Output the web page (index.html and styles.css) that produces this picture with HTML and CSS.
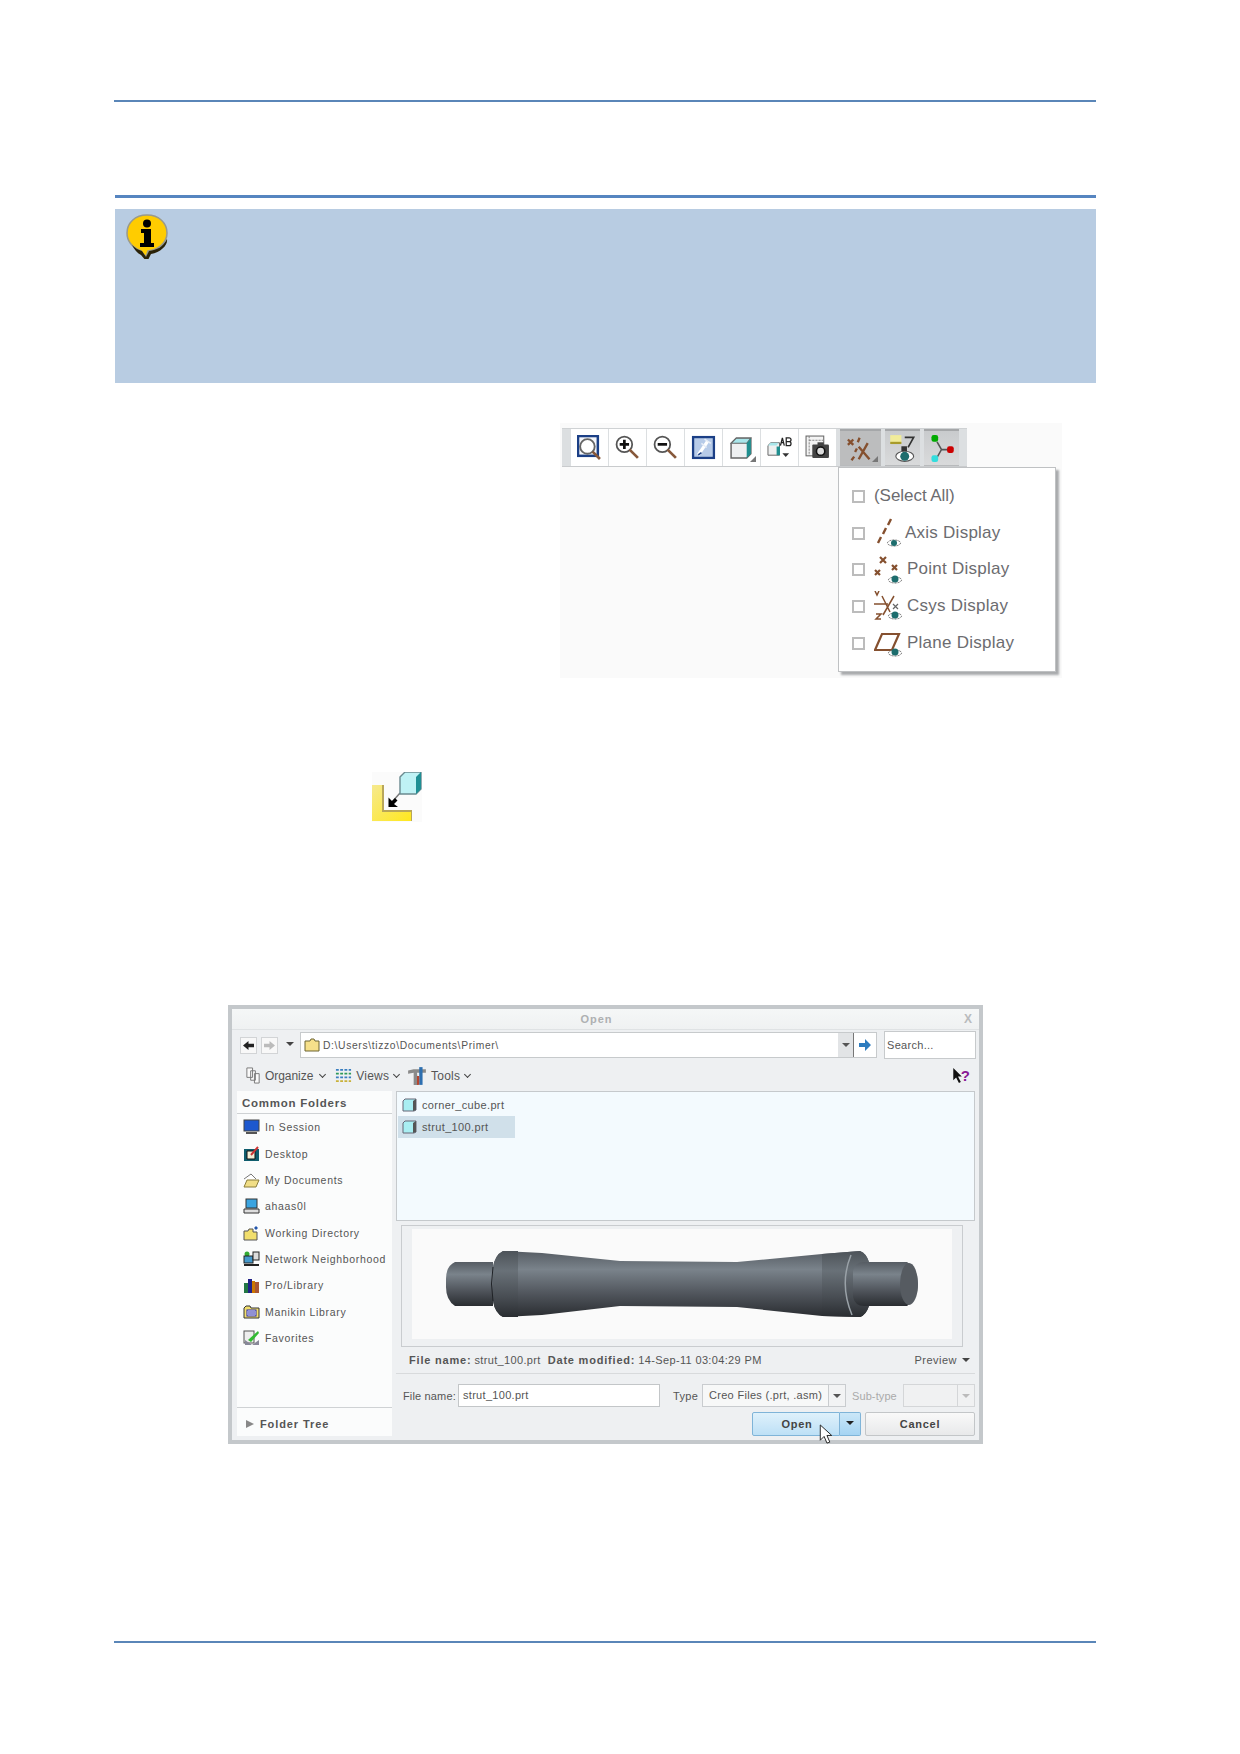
FILE: index.html
```html
<!DOCTYPE html>
<html lang="en">
<head>
<meta charset="utf-8">
<title>Open dialog page</title>
<link rel="stylesheet" href="styles.css">
</head>
<body>
<div class="page">
  <div class="rule rule-top"></div>
  <div class="rule rule-head"></div>

  <div class="note">
    <svg class="note-icon" viewBox="0 0 46 46">
      <path d="M23 2C11 2 3 10 3 20c0 9 7 15 14 18l5 6 2-6c10-1 19-8 19-18C43 10 35 2 23 2z" fill="#fc0" stroke="#9a9a8a" stroke-width="1.5"/>
      <path d="M8 32c3 3 6 5 10 6l4 6 3-6c8-1 14-4 18-12 1 6-6 13-16 15l-4 8-6-7c-4-2-7-6-9-10z" fill="#2a2208"/>
      <circle cx="23" cy="10.500" r="4" fill="#000"/>
      <path d="M17 16h10v14h3v4H16v-4h4V20h-3z" fill="#000"/>
    </svg>
  </div>

  <div class="figure">
    <div class="tb">
      <div class="tb-cell">
        <svg viewBox="0 0 24 24"><rect x="1" y="1" width="19" height="19" fill="#f4f6fa" stroke="#1b3f86" stroke-width="2.400"/><circle cx="10" cy="11" r="7" fill="#fff" stroke="#666" stroke-width="1.800"/><path d="M15 16l7 7" stroke="#87583a" stroke-width="2.600"/></svg>
      </div>
      <div class="tb-cell">
        <svg viewBox="0 0 24 24"><circle cx="9" cy="9" r="7.500" fill="#fff" stroke="#555" stroke-width="1.700"/><path d="M9 4.500v9M4.500 9h9" stroke="#111" stroke-width="2.600"/><path d="M14 14l8 8" stroke="#87583a" stroke-width="2.600"/></svg>
      </div>
      <div class="tb-cell">
        <svg viewBox="0 0 24 24"><circle cx="9" cy="9" r="7.500" fill="#fff" stroke="#555" stroke-width="1.700"/><path d="M4.500 9h9" stroke="#111" stroke-width="2.600"/><path d="M14 14l8 8" stroke="#87583a" stroke-width="2.600"/></svg>
      </div>
      <div class="tb-cell">
        <svg viewBox="0 0 24 24"><rect x="2" y="2" width="20" height="20" fill="#b7cbe8" stroke="#1b3f86" stroke-width="2.200"/><path d="M7 19l9-13" stroke="#fff" stroke-width="3"/><path d="M13 4l6 4M10 8l5 4" stroke="#e8eef7" stroke-width="1.500"/><path d="M7 19l3-2" stroke="#1b3f86" stroke-width="1.500"/></svg>
      </div>
      <div class="tb-cell tb-corner">
        <svg viewBox="0 0 24 24"><path d="M2 8l5-5h14v15l-4 4H2z" fill="#eef0f1" stroke="#666" stroke-width="1.400"/><path d="M2 8l5-5h14l-4 5z" fill="#a8e6ea" stroke="#666"/><path d="M17 8l4-5v15l-4 4z" fill="#1f8f8f"/></svg>
      </div>
      <div class="tb-cell">
        <svg viewBox="0 0 26 24"><path d="M1 10l3-3h9v13H1z" fill="#eef0f0" stroke="#666"/><path d="M1 10l3-3h8l-2 3z" fill="#a8e6ea"/><rect x="10" y="11" width="3.500" height="9" fill="#1f8f8f"/><path d="M14 10l2-8 2 8M15 7h2M20 2v8h3a2 2 0 0 0 0-4h-3 3a2 2 0 0 0 0-4z" fill="none" stroke="#222" stroke-width="1.300"/><path d="M16 18h7l-3.500 4z" fill="#333"/></svg>
      </div>
      <div class="tb-cell">
        <svg viewBox="0 0 24 24"><rect x="1" y="1" width="17" height="19" fill="#f4f4f4" stroke="#666"/><path d="M4 1v19M4 5h14" stroke="#888" stroke-dasharray="2 1"/><rect x="7" y="9" width="16" height="13" rx="1" fill="#444"/><rect x="12" y="7" width="6" height="3" fill="#444"/><circle cx="15" cy="15.500" r="4" fill="#ddd" stroke="#111" stroke-width="1.500"/></svg>
      </div>
      <div class="tb-on tb-on-wide">
        <svg viewBox="0 0 30 26"><g stroke="#85502f" stroke-width="2.600" fill="none"><path d="M1 3l6 6M7 3L1 9M14 1l-2 5M11 13l-2 4M8 22l-3 4M23 7L13 25M13 11l12 14"/></g></svg>
      </div>
      <div class="tb-on">
        <svg viewBox="0 0 24 26"><path d="M1 1h10v7H1z" fill="#f1ec9a"/><path d="M1 8h10" stroke="#a89b2a" stroke-width="2"/><path d="M14 3h8l-5 9" fill="none" stroke="#333" stroke-width="1.500"/><rect x="11" y="11" width="5" height="5" fill="#333"/><ellipse cx="14" cy="20" rx="8" ry="4.500" fill="#fff" stroke="#555"/><circle cx="14" cy="20" r="4" fill="#1d6d6d"/></svg>
      </div>
      <div class="tb-on">
        <svg viewBox="0 0 24 26"><path d="M8 7l4 7-4 7M12 14h6" stroke="#555" stroke-width="1.400" fill="none"/><rect x="3" y="1" width="6" height="6" rx="2" fill="#0a0"/><rect x="3" y="19" width="6" height="6" rx="2" fill="#3dd"/><rect x="17" y="11" width="6" height="6" rx="2" fill="#c00"/></svg>
      </div>
    </div>

    <div class="menu">
      <div class="menu-row">
        <span class="box"></span><span class="menu-label menu-first">(Select All)</span>
      </div>
      <div class="menu-row">
        <span class="box"></span>
        <svg class="menu-icon" viewBox="0 0 30 30"><path d="M17 1l-3 6M12 10l-3 6M7 19l-3 6" stroke="#85502f" stroke-width="2.400"/><ellipse cx="20" cy="25" rx="6.500" ry="3" fill="#fff" stroke="#666" stroke-dasharray="2 1"/><circle cx="20" cy="25" r="3" fill="#1d6d6d"/></svg>
        <span class="menu-label">Axis Display</span>
      </div>
      <div class="menu-row">
        <span class="box"></span>
        <svg class="menu-icon menu-icon-wide" viewBox="0 0 30 30"><path d="M6 2l6 6M12 2L6 8M1 15l5 5M6 15l-5 5M18 10l5 5M23 10l-5 5" stroke="#85502f" stroke-width="2.200"/><ellipse cx="21" cy="25" rx="6.500" ry="3" fill="#fff" stroke="#666" stroke-dasharray="2 1"/><circle cx="21" cy="24" r="3.500" fill="#1d6d6d"/></svg>
        <span class="menu-label">Point Display</span>
      </div>
      <div class="menu-row">
        <span class="box"></span>
        <svg class="menu-icon menu-icon-wide" viewBox="0 0 30 30"><path d="M1 0l2 4 2-4M0 13h14M2 23h5l-5 5h5M20 5L9 24M8 5l8 16" stroke="#85502f" stroke-width="1.500" fill="none"/><path d="M19 13l5 5M24 13l-5 5" stroke="#666" stroke-width="1.200"/><ellipse cx="21" cy="25" rx="6.500" ry="3" fill="#fff" stroke="#666" stroke-dasharray="2 1"/><circle cx="21" cy="24" r="3.500" fill="#1d6d6d"/></svg>
        <span class="menu-label">Csys Display</span>
      </div>
      <div class="menu-row">
        <span class="box"></span>
        <svg class="menu-icon menu-icon-wide" viewBox="0 0 30 30"><path d="M1 22L8 6h17l-7 16z" fill="none" stroke="#85502f" stroke-width="2.200"/><ellipse cx="21" cy="25" rx="6.500" ry="3" fill="#fff" stroke="#666" stroke-dasharray="2 1"/><circle cx="21" cy="24" r="3.500" fill="#1d6d6d"/></svg>
        <span class="menu-label">Plane Display</span>
      </div>
    </div>
  </div>

  <svg class="l-icon" viewBox="0 0 50 50">
    <defs>
      <linearGradient id="lfill" x1="0" y1="0" x2="1" y2="1">
        <stop offset="0" stop-color="#f6e98e"/>
        <stop offset="1" stop-color="#ffe81e"/>
      </linearGradient>
    </defs>
    <rect width="50" height="50" fill="#fbfbfb"/>
    <path d="M0 13h12v25h28v11H0z" fill="#b8a65a"/>
    <path d="M0 13h10v27h29v9H0z" fill="url(#lfill)"/>
    <path d="M28 21L20 30" stroke="#777" stroke-width="1.400"/>
    <path d="M16.500 35V25.500L20 29l3-3 2.500 2.500L22 32l4 3z" fill="#000"/>
    <path d="M28 5l5-5h16v17l-5 5H28z" fill="#bff2f5" stroke="#6b8a90" stroke-width="1.400"/>
    <path d="M44 5l5-5v17l-5 5z" fill="#1f8f94"/>
  </svg>

  <div class="dialog">
    <div class="d-title">
      <span class="d-title-text">Open</span>
      <span class="d-close">X</span>
    </div>

    <div class="d-nav">
      <span class="nav-btn nav-back"><svg viewBox="0 0 14 12"><path d="M7 1L1 6l6 5V8h6V4H7z" fill="#222"/></svg></span>
      <span class="nav-btn nav-fwd"><svg viewBox="0 0 14 12"><path d="M7 1l6 5-6 5V8H1V4h6z" fill="#bbb"/></svg></span>
      <span class="tri-down"></span>
      <div class="path">
        <svg class="folder" viewBox="0 0 16 14"><path d="M1 3h5l1-2h3l1 2h4v10H1z" fill="#f6e08a" stroke="#6d6432"/></svg>
        <span class="path-text">D:\Users\tizzo\Documents\Primer\</span>
        <span class="path-drop"><i class="tri-small"></i></span>
        <span class="path-go"><svg viewBox="0 0 14 14"><path d="M7 1l6 6-6 6V9H1V5h6z" fill="#2d7cbf"/></svg></span>
      </div>
      <span class="search">Search...</span>
    </div>

    <div class="d-tools">
      <svg class="tool-ic" viewBox="0 0 18 18"><path d="M2 1h6v10H2zM6 4h5v10H6zM10 7h5v10h-5z" fill="#fafafa" stroke="#777"/></svg>
      <span class="tool-label tool-first">Organize</span><span class="chev"></span>
      <svg class="tool-ic tool-gap" viewBox="0 0 18 18"><g fill="none" stroke-width="2" stroke-dasharray="3 1.500"><path d="M1 3h16" stroke="#3a7fc0"/><path d="M1 7h16" stroke="#2e9a5a"/><path d="M1 11h16" stroke="#3a7fc0"/><path d="M1 15h16" stroke="#c9b13a"/></g></svg>
      <span class="tool-label">Views</span><span class="chev"></span>
      <svg class="tool-ic tool-gap tool-ic-wide" viewBox="0 0 18 18"><path d="M1 4l5-1h11v3H9l1 11H6V6L1 7z" fill="#8a8a8a"/><path d="M11 1h3v16h-3z" fill="#2d6fb0"/><path d="M9 9h2v8H9z" fill="#b5452f"/></svg>
      <span class="tool-label">Tools</span><span class="chev"></span>
      <span class="tool-help">
        <svg class="help-arrow" viewBox="0 0 12 18"><path d="M1 1v13l3-3 3 6 2-1-3-6h4z" fill="#111"/></svg><span class="help-q">?</span>
      </span>
    </div>

    <div class="d-body">
      <div class="side">
        <div class="side-head">Common Folders</div>
        <div class="side-list">
          <div class="side-row"><svg viewBox="0 0 17 16"><rect x="1" y="1" width="15" height="11" fill="#1d58cf" stroke="#444"/><path d="M3 14h11" stroke="#555" stroke-width="2"/></svg><span>In Session</span></div>
          <div class="side-row"><svg viewBox="0 0 17 16"><rect x="1" y="3" width="15" height="12" fill="#0f5d6d"/><path d="M4 5h8v8H4z" fill="#f4efd6" stroke="#111"/><path d="M8 9l7-8" stroke="#c33" stroke-width="2"/></svg><span>Desktop</span></div>
          <div class="side-row"><svg viewBox="0 0 17 16"><path d="M1 7l7-5 5 5" fill="#fff" stroke="#777"/><path d="M1 15l3-7h12l-3 7z" fill="#f1de86" stroke="#8a7d3a"/></svg><span>My Documents</span></div>
          <div class="side-row"><svg viewBox="0 0 17 16"><rect x="3" y="1" width="11" height="9" fill="#3ba4e0" stroke="#333"/><path d="M1 11h15v4H1z" fill="#ddd" stroke="#333"/></svg><span>ahaas0l</span></div>
          <div class="side-row"><svg viewBox="0 0 17 16"><path d="M1 6h4l1-2h4v3h4v8H1z" fill="#f1de6c" stroke="#555"/><path d="M13 1l2 2-2 2-2-2z" fill="#25a"/></svg><span>Working Directory</span></div>
          <div class="side-row"><svg viewBox="0 0 17 16"><circle cx="4" cy="3" r="2.500" fill="#3a3"/><rect x="1" y="5" width="9" height="7" fill="#49c" stroke="#222"/><rect x="10" y="1" width="6" height="8" fill="#ddd" stroke="#222"/><path d="M1 14h15" stroke="#222" stroke-width="2"/></svg><span>Network Neighborhood</span></div>
          <div class="side-row"><svg viewBox="0 0 17 16"><path d="M1 6h4v10H1z" fill="#274"/><path d="M5 2h4v14H5z" fill="#228"/><path d="M9 4h3v12H9z" fill="#c70"/><path d="M12 5h4v11h-4z" fill="#a53"/></svg><span>Pro/Library</span></div>
          <div class="side-row"><svg viewBox="0 0 17 16"><path d="M1 4l2-2h4l1 2h8v10H1z" fill="#f1de6c" stroke="#333"/><rect x="4" y="6" width="9" height="6" fill="#fff" stroke="#22a"/><path d="M5 8h7M5 10h7" stroke="#22a"/></svg><span>Manikin Library</span></div>
          <div class="side-row"><svg viewBox="0 0 17 16"><rect x="1" y="1" width="10" height="12" fill="#eee" stroke="#555"/><path d="M5 10L15 1l1 2-8 9z" fill="#3b3"/><path d="M2 10l7 5 7-5v5H2z" fill="#889"/></svg><span>Favorites</span></div>
        </div>
        <div class="side-tree"><i class="tri-right"></i><span>Folder Tree</span></div>
      </div>

      <div class="main">
        <div class="files">
          <div class="file"><svg viewBox="0 0 15 14"><path d="M1 3l2-2h11v11l-2 1H1z" fill="#a9eef2" stroke="#667"/><path d="M11 3l3-2v11l-3 1z" fill="#555"/></svg><span>corner_cube.prt</span></div>
          <div class="file file-sel"><svg viewBox="0 0 15 14"><path d="M1 3l2-2h11v11l-2 1H1z" fill="#a9eef2" stroke="#667"/><path d="M11 3l3-2v11l-3 1z" fill="#555"/></svg><span>strut_100.prt</span></div>
        </div>

        <div class="preview">
          <div class="preview-inner">
            <svg class="strut" viewBox="0 0 540 110">
              <defs>
                <linearGradient id="metal" x1="0" y1="0" x2="0" y2="1">
                  <stop offset="0" stop-color="#565c63"/>
                  <stop offset=".28" stop-color="#7a838b"/>
                  <stop offset=".65" stop-color="#50555c"/>
                  <stop offset="1" stop-color="#2a2d31"/>
                </linearGradient>
                <linearGradient id="band" x1="0" y1="0" x2="0" y2="1">
                  <stop offset="0" stop-color="#4d5359"/>
                  <stop offset=".3" stop-color="#697178"/>
                  <stop offset=".7" stop-color="#484d53"/>
                  <stop offset="1" stop-color="#2a2d31"/>
                </linearGradient>
              </defs>
              <path d="M34 50q0-13 9-17h38v44H43q-9-6-9-19z" fill="url(#metal)"/>
              <path d="M81 38Q83 26 91 22L130 24 208 32 325 33 410 25 448 22Q454 24 457 33V77Q454 86 448 88L410 87 325 78 208 77 130 86 91 88Q83 84 81 72z" fill="url(#metal)"/>
              <path d="M81 38Q83 26 91 22L106 22V88H91Q83 84 81 72z" fill="url(#band)"/>
              <path d="M410 25L448 22Q454 24 457 33V77Q454 86 448 88L410 87z" fill="url(#band)"/>
              <path d="M81 38q-3 17 0 34" stroke="#1f2226" fill="none"/>
              <path d="M439 26q-12 29 1 60" stroke="#9aa2a8" stroke-width="1.500" fill="none"/>
              <path d="M441 42Q443 33 452 33H495Q506 40 506 55T495 77H452Q443 77 441 68z" fill="url(#metal)"/>
              <ellipse cx="497" cy="55" rx="9" ry="21" fill="#565b61"/>
            </svg>
          </div>
        </div>

        <div class="status">
          <span class="st-b">File name:</span><span class="st-v">strut_100.prt</span>
          <span class="st-b st-gap">Date modified:</span><span class="st-v">14-Sep-11 03:04:29 PM</span>
          <span class="st-prev">Preview</span><i class="tri-small st-tri"></i>
        </div>

        <div class="form">
          <span class="f-label">File name:</span>
          <span class="f-input">strut_100.prt</span>
          <span class="f-type">Type</span>
          <span class="f-select">Creo Files (.prt, .asm)</span>
          <span class="f-arrow"><i class="tri-small"></i></span>
          <span class="f-sub">Sub-type</span>
          <span class="f-dis"></span>
          <span class="f-dis-arrow"><i class="tri-small tri-grey"></i></span>
        </div>

        <div class="btns">
          <span class="btn-open">Open</span>
          <span class="btn-drop"><i class="tri-small"></i></span>
          <span class="btn-cancel">Cancel</span>
          <svg class="cursor" viewBox="0 0 14 22"><path d="M1 1v16l4-4 3 7 3-1-3-7h5z" fill="#fff" stroke="#222"/></svg>
        </div>
      </div>
    </div>
  </div>

  <div class="rule rule-foot"></div>
</div>
</body>
</html>
```

FILE: styles.css
```css
* { box-sizing: border-box; }
html, body { margin: 0; padding: 0; background: #fff; }
body { font-family: "Liberation Sans", Arial, sans-serif; }
.page { width: 1240px; height: 1754px; padding: 100px 144px 0 114px; overflow: hidden; }

.rule { background: #5a86b8; height: 2px; width: 982px; }
.rule-head { margin-top: 93px; height: 3px; background: #5685c0; margin-left: 1px; width: 981px; }
.rule-foot { margin-top: 197px; }

.note { margin: 11px 0 0 1px; width: 981px; height: 174px; background: #b8cce2; padding: 4px 0 0 9px; }
.note-icon { display: block; width: 46px; height: 46px; }

.figure { position: relative; margin: 40px 0 0 446px; width: 502px; height: 255px; background: #fafafa; padding: 5px 0 0 2px; }
.tb { display: flex; width: 405px; height: 39px; background: #dcdfe1; border-top: 1px solid #cfd2d4; padding-left: 9px; gap: 1px; border-bottom: 1px solid #c9cbcd; }
.tb-cell { position: relative; width: 37px; background: #fff; display: flex; align-items: center; justify-content: center; flex: none; }
.tb-cell svg { width: 25px; height: 25px; }
.tb-corner::after { content: ""; position: absolute; right: 4px; bottom: 4px; border: 3px solid transparent; border-right-color: #777; border-bottom-color: #777; }
.tb-on { position: relative; flex: none; width: 35px; margin-left: 3px; background: linear-gradient(#c9cbcd, #d9dadb); border-top: 2px solid #a5a7a9; border-bottom: 1px solid #b8babc; display: flex; align-items: center; justify-content: center; }
.tb-on svg { width: 27px; height: 29px; }
.tb-on-wide { width: 41px; background: #bcbdbe; }
.tb-on-wide::after { content: ""; position: absolute; right: 3px; bottom: 3px; border: 3px solid transparent; border-right-color: #777; border-bottom-color: #777; }

.menu { position: absolute; left: 278px; top: 44px; width: 218px; height: 205px; background: #fff; border: 1px solid #bfc1c3; box-shadow: 3px 3px 2px #a9abad; padding: 10px 0 0 13px; }
.menu-row { display: flex; align-items: center; height: 36.7px; }
.box { width: 13px; height: 13px; border: 2px solid #bcbcbc; background: #fff; flex: none; margin-right: 9px; }
.menu-icon { width: 30px; height: 30px; flex: none; margin-right: 1px; }
.menu-icon-wide { margin-right: 3px; }
.menu-label { font-size: 17px; color: #6c6c70; letter-spacing: .25px; padding-bottom: 1px; }
.menu-first { letter-spacing: -.05px; }

.l-icon { display: block; width: 50px; height: 50px; margin: 94px 0 0 258px; }

.dialog { margin: 183px 0 0 114px; width: 755px; height: 439px; border: 4px solid #c4c8cb; background: #eef0f2; font-size: 11px; color: #444; }
.d-title { position: relative; height: 21px; background: linear-gradient(#f5f7f7, #eff1f2); border-bottom: 1px solid #dfe2e4; display: flex; align-items: center; justify-content: center; }
.d-title-text { color: #aeb0b2; font-weight: bold; letter-spacing: 1px; padding-right: 18px; }
.d-close { position: absolute; right: 7px; top: 3px; font-weight: bold; font-size: 12px; color: #b9bbbd; }

.d-nav { display: flex; align-items: center; height: 30px; padding-left: 8px; }
.nav-btn { width: 17px; height: 17px; background: #f8f8f8; border: 1px solid #d2d4d6; display: flex; align-items: center; justify-content: center; flex: none; }
.nav-btn svg { width: 13px; height: 11px; }
.nav-fwd { margin-left: 4px; }
.tri-down { width: 0; height: 0; border: 4px solid transparent; border-top: 4px solid #444; border-bottom: 0; margin: 0 6px 2px 8px; }
.path { display: flex; align-items: center; width: 577px; height: 26px; background: #fff; border: 1px solid #c7cacc; padding-left: 3px; }
.folder { width: 16px; height: 14px; flex: none; }
.path-text { flex: 1; margin-left: 3px; font-size: 10.3px; color: #555; letter-spacing: .65px; }
.path-drop { width: 16px; height: 24px; background: #e2e4e6; border-right: 1px solid #777; display: flex; align-items: center; justify-content: center; }
.path-go { width: 22px; display: flex; justify-content: center; }
.path-go svg { width: 14px; height: 14px; }
.tri-small { display: inline-block; width: 0; height: 0; border: 4px solid transparent; border-top: 4px solid #555; border-bottom: 0; }
.tri-grey { border-top-color: #bbb; }
.search { width: 92px; height: 28px; margin-left: 7px; background: #fff; border: 1px solid #c7cacc; padding-left: 2px; line-height: 26px; font-size: 11px; color: #555; letter-spacing: .3px; }

.d-tools { display: flex; align-items: center; height: 31px; padding-left: 13px; }
.tool-ic { width: 17px; height: 17px; flex: none; }
.tool-gap { margin-left: 10px; }
.tool-ic-wide { width: 20px; height: 20px; margin-left: 8px; }
.tool-label { margin-left: 4px; font-size: 12px; color: #555; letter-spacing: .2px; }
.tool-first { margin-left: 3px; letter-spacing: -.05px; margin-right: 2px; }
.chev { width: 5px; height: 5px; border-right: 1px solid #444; border-bottom: 1px solid #444; transform: rotate(45deg); margin: -3px 0 0 5px; }
.tool-help { margin-left: auto; margin-right: 9px; display: flex; align-items: center; }
.help-arrow { width: 12px; height: 17px; }
.help-q { font-size: 15px; font-weight: bold; color: #8a1a94; margin-left: -3px; line-height: 1; }

.d-body { display: flex; padding-left: 5px; gap: 4px; }
.side { width: 155px; height: 345px; background: #fbfcfc; display: flex; flex-direction: column; }
.side-head { height: 23px; border-bottom: 1px solid #cfd2d4; padding: 5px 0 0 5px; font-weight: bold; font-size: 11.500px; color: #555; letter-spacing: .75px; line-height: 14px; }
.side-list { padding-top: 0; flex: 1; }
.side-row { display: flex; align-items: center; height: 26.35px; padding-left: 6px; font-size: 10.500px; color: #555; letter-spacing: .68px; }
.side-row svg { width: 17px; height: 16px; flex: none; margin-right: 5px; }
.side-tree { display: flex; align-items: center; height: 29px; border-top: 1px solid #cfd2d4; padding: 3px 0 0 9px; font-weight: bold; font-size: 11px; color: #555; letter-spacing: .9px; }
.tri-right { width: 0; height: 0; border: 4px solid transparent; border-left: 8px solid #888; border-right: 0; margin-right: 6px; }

.main { width: 579px; }
.files { height: 130px; background: #f3fafe; border: 1px solid #c5c9cc; padding: 2px 0 0 1px; }
.file { display: flex; align-items: center; height: 22px; width: 117px; padding-left: 4px; font-size: 11px; color: #555; letter-spacing: .35px; white-space: nowrap; }
.file svg { width: 15px; height: 14px; margin-right: 5px; flex: none; }
.file-sel { background: #d0e0ea; }

.preview { margin: 4px 0 0 5px; width: 562px; height: 122px; border: 1px solid #c9cccf; padding: 3px 0 0 10px; }
.preview-inner { width: 540px; height: 110px; background: #fafafa; }
.strut { display: block; width: 540px; height: 110px; }

.status { display: flex; align-items: center; height: 27px; border-bottom: 1px solid #d8dadc; padding-left: 13px; font-size: 11px; color: #555; letter-spacing: .35px; white-space: nowrap; }
.st-b { font-weight: bold; letter-spacing: .8px; }
.st-v { margin-left: 3px; }
.st-gap { margin-left: 7px; }
.st-prev { margin-left: auto; letter-spacing: .5px; }
.st-tri { margin: 0 5px 0 5px; border-top-color: #444; }

.form { display: flex; align-items: center; height: 23px; margin-top: 10px; font-size: 11px; color: #555; letter-spacing: .3px; white-space: nowrap; }
.f-label { width: 62px; padding-left: 7px; letter-spacing: .15px; }
.f-input { width: 202px; height: 23px; background: #fff; border: 1px solid #c3c6c8; padding-left: 4px; line-height: 21px; }
.f-type { margin-left: 13px; width: 29px; }
.f-select { width: 127px; height: 23px; background: #f7f8f8; border: 1px solid #c9cccf; padding-left: 6px; line-height: 21px; overflow: hidden; }
.f-arrow { width: 17px; height: 23px; background: #f2f3f4; border: 1px solid #c9cccf; border-left: 0; display: flex; align-items: center; justify-content: center; }
.f-sub { width: 57px; padding-left: 6px; color: #aaa; letter-spacing: .1px; }
.f-dis { width: 55px; height: 23px; border: 1px solid #d4d6d8; background: #f0f1f2; }
.f-dis-arrow { width: 17px; height: 23px; border: 1px solid #d4d6d8; border-left: 0; background: #f0f1f2; display: flex; align-items: center; justify-content: center; }

.btns { position: relative; display: flex; justify-content: flex-end; margin-top: 5px; height: 24px; font-size: 11px; font-weight: bold; color: #444; }
.btn-open { width: 88px; background: linear-gradient(#dff1fb, #bde0f6); border: 1px solid #7fb4d8; border-radius: 2px 0 0 2px; text-align: center; line-height: 22px; letter-spacing: .7px; padding-left: 2px; }
.btn-drop { width: 21px; background: linear-gradient(#cbe7f8, #a5d4f3); border: 1px solid #7fb4d8; border-left: 0; border-radius: 0 2px 2px 0; display: flex; justify-content: center; align-items: center; }
.btn-drop .tri-small { border-top-color: #222; margin-bottom: 3px; }
.btn-cancel { width: 110px; margin-left: 4px; background: linear-gradient(#f9f9f9, #e8e9ea); border: 1px solid #c3c6c8; border-radius: 2px; text-align: center; line-height: 22px; letter-spacing: .7px; }
.cursor { position: absolute; left: 423px; top: 12px; width: 14px; height: 21px; }
```
